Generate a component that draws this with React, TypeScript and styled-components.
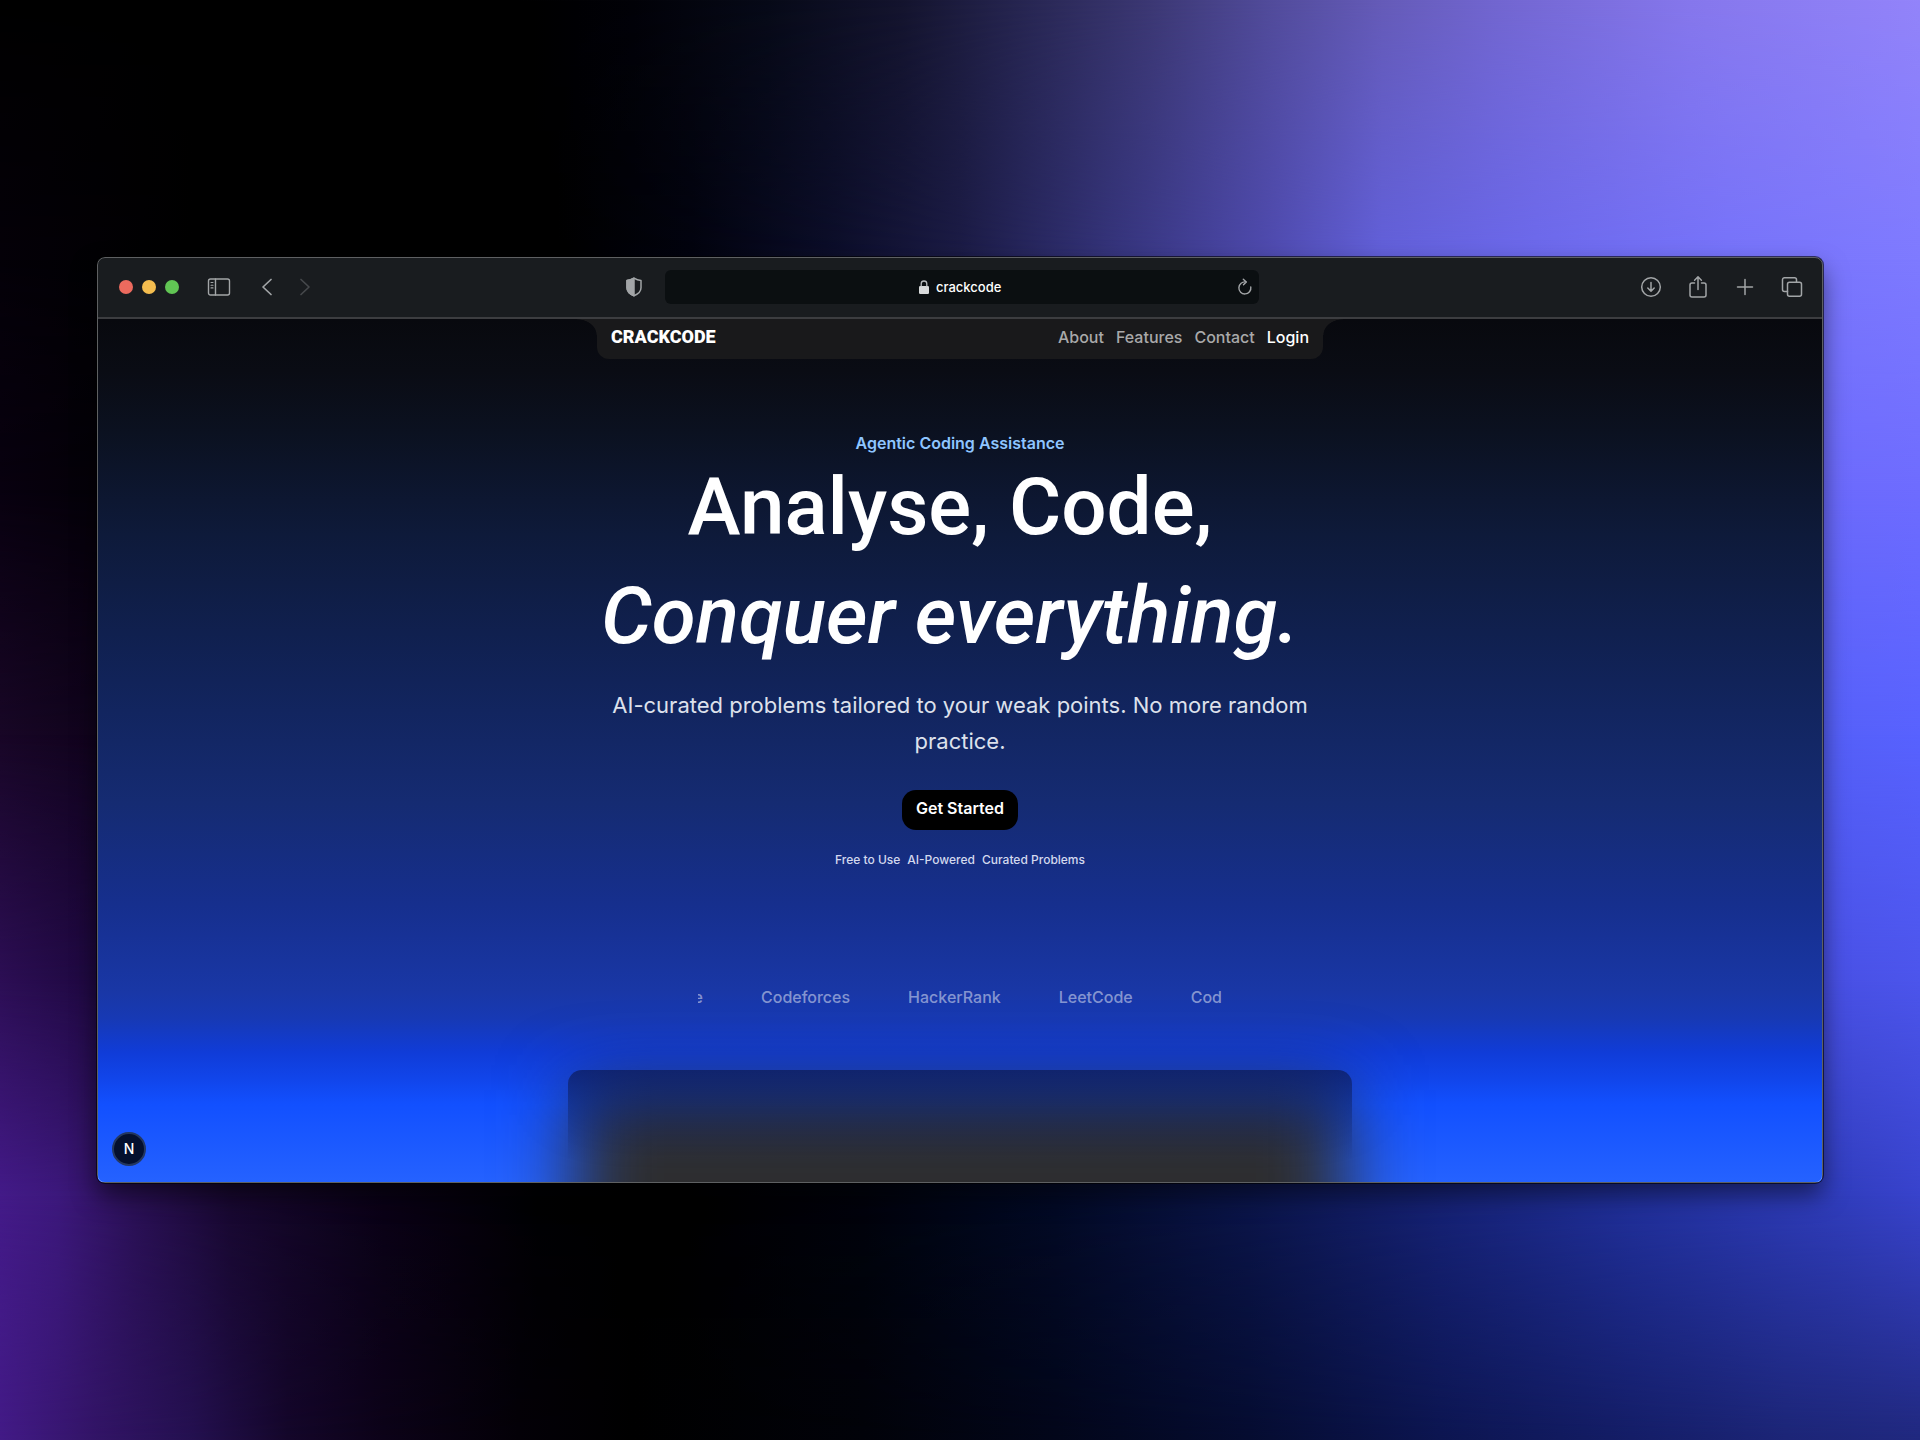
import React from "react";
import styled, { createGlobalStyle } from "styled-components";

const GlobalStyle = createGlobalStyle`
  *, *::before, *::after { box-sizing: border-box; }
  body {
    margin: 0;
    background: #000;
    color: #fff;
    font-family: Inter, "Liberation Sans", sans-serif;
    font-size: 16px;
    line-height: 20px;
  }
  button, input { font: inherit; color: inherit; }
  a { color: inherit; text-decoration: none; }
`;

/* ---------- wallpaper ---------- */

const Desktop = styled.div`
  position: relative;
  isolation: isolate;
  overflow: hidden;
  min-height: 100vh;
  display: flex;
  flex-direction: column;
  justify-content: center;
  padding: 32px 97px;
`;

/* Each band is a horizontal ramp that fades in over the one before it. */
const WallpaperBand = styled.div<{ $colors: string; $from: number; $to: number }>`
  position: absolute;
  inset: 0;
  z-index: -1;
  background: linear-gradient(90deg, ${(p) => p.$colors});
  mask-image: linear-gradient(transparent ${(p) => p.$from}%, #000 ${(p) => p.$to}%);
`;

const bands = [
  {
    from: -1,
    to: 0,
    colors:
      "#000 27%, #020208 33%, #070a18 40%, #14142e 47%, #262550 53%, #3c3874 60%, #514b9a 66%, #655bb8 72%, #7266d0 78%, #8677ec 88%, #9384fa",
  },
  {
    from: 0,
    to: 18,
    colors:
      "#040008, #020004 5%, #000 10%, #000 29%, #02030f 36%, #0b0d28 43%, #1b1b45 50%, #35347c 58%, #4e4aae 66%, #6260da 72%, #6c69ec 80%, #7673fa 90%, #7e7aff",
  },
  { from: 18, to: 34, colors: "#08000f, #040008 5%, #000 10%, #000 30%, #4a4aa8 70%, #6a69fa 92%, #6e6cff" },
  { from: 34, to: 51, colors: "#180626, #10031c 5%, #000 12%, #000 40%, #3a40a8 75%, #5560f8 95%, #5862ff" },
  { from: 51, to: 68, colors: "#2c0e54, #1e0840 5%, #0a0216 12%, #000 30%, #2a31a0 75%, #4850e4 95%, #4c55ec" },
  {
    from: 68,
    to: 83,
    colors:
      "#431a88, #3c187c 3%, #2a1055 7%, #180830 12%, #0a0216 20%, #010003 28%, #000 35%, #00030c 45%, #030a26 55%, #0b154a 65%, #162276 75%, #21309c 85%, #2f3cba 95%, #3843cc",
  },
  {
    from: 83,
    to: 100,
    colors:
      "#421a86, #321466 5%, #241050 10%, #14062a 15%, #0c0218 20%, #030007 27%, #000 33%, #010209 45%, #02061a 55%, #050c30 65%, #0c1550 75%, #141d66 85%, #1c2576 93%, #20287e",
  },
];

/* ---------- browser window ---------- */

const BrowserWindow = styled.div`
  position: relative;
  padding: 1px;
  border-radius: 8px;
  overflow: hidden;
  background: #191c1f;

  &::after {
    content: "";
    position: absolute;
    inset: 0;
    border: 1px solid rgba(255, 255, 255, 0.3);
    border-radius: inherit;
    pointer-events: none;
  }
`;

const WindowShadow = styled.div`
  border-radius: 8px;
  box-shadow: 0 0 0 1px rgba(0, 0, 0, 0.6), 0 12px 24px rgba(0, 0, 0, 0.5);
`;

const Toolbar = styled.header`
  display: grid;
  grid-template-columns: 1fr minmax(240px, 594px) 1fr;
  align-items: center;
  column-gap: 19px;
  padding: 12px 18px 13px 21px;
  background: #191c1f;
  border-bottom: 2px solid #3c3d40;
`;

const ToolbarStart = styled.div`
  display: flex;
  align-items: center;
  gap: 24px;
`;

const TrafficLights = styled.div`
  display: flex;
  gap: 9px;
  margin-right: 4px;
`;

const TrafficLight = styled.button<{ $color: string }>`
  width: 14px;
  height: 14px;
  padding: 0;
  border: 0;
  border-radius: 50%;
  background: ${(p) => p.$color};
`;

const HistoryButtons = styled.div`
  display: flex;
  gap: 14px;
`;

const ToolButton = styled.button<{ $dim?: boolean; $end?: boolean }>`
  display: grid;
  place-items: center;
  width: 24px;
  height: 24px;
  padding: 0;
  border: 0;
  background: none;
  color: ${(p) => (p.$dim ? "#45484b" : "#a2a5a7")};
  margin-left: ${(p) => (p.$end ? "auto" : "0")};

  svg {
    display: block;
    fill: none;
    stroke: currentColor;
    stroke-linecap: round;
    stroke-linejoin: round;
  }
`;

const AddressBar = styled.div`
  display: grid;
  grid-template-columns: 1fr auto 1fr;
  align-items: center;
  height: 34px;
  padding: 0 2px;
  border-radius: 6px;
  background: #0b0f11;
`;

const AddressField = styled.label`
  grid-column: 2;
  display: flex;
  align-items: center;
  gap: 7px;
`;

const AddressInput = styled.input`
  width: 68px;
  padding: 0;
  border: 0;
  outline: 0;
  background: none;
  color: #fff;
  font-size: 13px;
  font-weight: 500;
`;

const ToolbarEnd = styled.div`
  display: flex;
  justify-content: flex-end;
  gap: 23px;
`;

/* ---------- page ---------- */

const Page = styled.div`
  position: relative;
  isolation: isolate;
  overflow: hidden;
  display: flex;
  flex-direction: column;
  align-items: center;
  background: linear-gradient(
    #08090e,
    #0a0c14 6%,
    #0b1120 13%,
    #0e1a3a 25%,
    #112359 42%,
    #152b72 56%,
    #162f8e 68%,
    #1937a6 78%,
    #1739b4 81%,
    #103cd8 85%,
    #1145ea 88%,
    #1250ff 91%,
    #2562ff
  );
`;

const SiteNav = styled.nav`
  position: relative;
  display: flex;
  align-items: center;
  justify-content: space-between;
  width: 100%;
  max-width: 726px;
  padding: 8px 14px 12px;
  border-radius: 0 0 12px 12px;
  background: #19191b;

  &::before,
  &::after {
    content: "";
    position: absolute;
    top: 0;
    width: 20px;
    height: 16px;
  }
  &::before {
    right: 100%;
    background: radial-gradient(ellipse 20px 16px at 0 100%, transparent 96%, #19191b);
  }
  &::after {
    left: 100%;
    background: radial-gradient(ellipse 20px 16px at 100% 100%, transparent 96%, #19191b);
  }
`;

const Logo = styled.a`
  font-family: Roboto, "Liberation Sans", sans-serif;
  font-size: 18px;
  font-weight: 900;
`;

const NavLinks = styled.div`
  display: flex;
  gap: 12px;
`;

const NavLink = styled.a<{ $active?: boolean }>`
  font-weight: 500;
  color: ${(p) => (p.$active ? "#fff" : "#a9a9aa")};
`;

const Hero = styled.main`
  display: flex;
  flex-direction: column;
  align-items: center;
  width: 100%;
  max-width: 726px;
  padding-top: 74px;
  text-align: center;
`;

const Eyebrow = styled.p`
  margin: 0;
  font-weight: 600;
  color: #8ec5ff;
`;

const Headline = styled.h1`
  margin: 0;
  padding-right: 20px;
  font-family: Roboto, "Liberation Sans", sans-serif;
  font-size: 80px;
  font-weight: 500;
  line-height: 109px;

  em { display: block; }
`;

const Lede = styled.p`
  margin: 16px 0 31px;
  font-size: 22px;
  line-height: 36px;
  color: #dde1ec;
`;

const PrimaryButton = styled.button`
  height: 40px;
  padding: 0 14px 4px;
  border: 0;
  border-radius: 14px;
  background: #000;
  color: #fff;
  font-weight: 600;
`;

const Perks = styled.ul`
  display: flex;
  gap: 7px;
  margin: 20px 0 0;
  padding: 0;
  list-style: none;
  font-size: 12px;
  font-weight: 500;
  color: #d3d9ee;
`;

const Marquee = styled.section`
  overflow: hidden;
  width: 100%;
  max-width: 524px;
  margin: 115px 0 61px;
`;

const MarqueeTrack = styled.ul`
  display: flex;
  gap: 58px;
  width: max-content;
  margin: 0;
  padding: 0;
  list-style: none;
  transform: translateX(-69px);
`;

const MarqueeItem = styled.li`
  font-weight: 500;
  line-height: 24px;
  color: rgba(255, 255, 255, 0.48);
`;

const PreviewCard = styled.section`
  position: relative;
  width: 100%;
  max-width: 784px;
  height: 112px;
  border-radius: 14px 14px 0 0;
  background: linear-gradient(rgba(8, 12, 44, 0.5), rgba(20, 24, 44, 0) 80%);

  &::before {
    content: "";
    position: absolute;
    z-index: -1;
    inset: 20px 6px -160px;
    background: #2d2d2f;
    filter: blur(38px);
  }
`;

const DevBadge = styled.button`
  position: absolute;
  left: 14px;
  bottom: 16px;
  width: 34px;
  height: 34px;
  padding: 0;
  border: 2px solid #24375f;
  border-radius: 50%;
  background: #04102e;
  color: #fff;
  font-size: 14px;
  font-weight: 500;
`;

/* ---------- icons ---------- */

const SidebarIcon = () => (
  <svg width="24" height="20" viewBox="0 0 24 20" strokeWidth="1.4" aria-hidden="true">
    <rect x="1.5" y="2" width="21" height="16" rx="2" />
    <path d="M8.5 2v16" />
    <path d="M4 5.5h2M4 8.2h2M4 10.9h2" strokeWidth="1.1" />
  </svg>
);

const ChevronIcon = ({ forward }: { forward?: boolean }) => (
  <svg width="12" height="20" viewBox="0 0 12 20" strokeWidth="1.7" aria-hidden="true">
    <path d={forward ? "M2 2.5 10 10 2 17.5" : "M10 2.5 2 10l8 7.5"} />
  </svg>
);

const ShieldIcon = () => (
  <svg width="18" height="20" viewBox="0 0 18 20" strokeWidth="1.5" aria-hidden="true">
    <path d="M9 1.2c2.3 1.5 4.6 2.2 7 2.3v7.2c0 3.6-2.6 6.2-7 8-4.4-1.8-7-4.4-7-8V3.5C4.4 3.400 6.700 2.700 9 1.200Z" />
    <path d="M9 1.2v17.5c-4.4-1.8-7-4.4-7-8V3.5C4.4 3.4 6.7 2.7 9 1.2Z" fill="currentColor" />
  </svg>
);

const LockIcon = () => (
  <svg width="10" height="14" viewBox="0 0 10 14" fill="none" aria-hidden="true">
    <rect x="0" y="6" width="10" height="8" rx="1.3" fill="#d8dadb" />
    <path d="M2.200 6.500V3.800a2.800 2.800 0 0 1 5.600 0v2.700" stroke="#b9bcbe" strokeWidth="1.3" />
  </svg>
);

const ReloadIcon = () => (
  <svg width="16" height="18" viewBox="0 0 16 18" strokeWidth="1.4" aria-hidden="true">
    <path d="M8.800 4A6 6 0 1 0 13.800 9" />
    <path d="M6.300 1.300 9.300 4 6.500 6.800" />
  </svg>
);

const DownloadIcon = () => (
  <svg width="22" height="22" viewBox="0 0 22 22" strokeWidth="1.5" aria-hidden="true">
    <circle cx="11" cy="11" r="9.3" />
    <path d="M11 6.500v8.700M7.800 12l3.200 3.300 3.200-3.300" />
  </svg>
);

const ShareIcon = () => (
  <svg width="22" height="24" viewBox="0 0 22 24" strokeWidth="1.5" aria-hidden="true">
    <path d="M7.500 8H5a2 2 0 0 0-2 2v10a2 2 0 0 0 2 2h12a2 2 0 0 0 2-2V10a2 2 0 0 0-2-2h-2.500" />
    <path d="M11 14.500V2M7.600 5.200 11 1.800l3.400 3.400" />
  </svg>
);

const PlusIcon = () => (
  <svg width="18" height="18" viewBox="0 0 18 18" strokeWidth="1.5" aria-hidden="true">
    <path d="M9 1.500v15M1.500 9h15" />
  </svg>
);

const TabsIcon = () => (
  <svg width="22" height="22" viewBox="0 0 22 22" strokeWidth="1.5" aria-hidden="true">
    <rect x="6.5" y="6.3" width="14" height="14" rx="2" />
    <path d="M6.500 15.500H3.500a2 2 0 0 1-2-2V3.700a2 2 0 0 1 2-2H13.500a2 2 0 0 1 2 2v2.500" />
  </svg>
);

/* ---------- app ---------- */

const lights = [
  { label: "Close", color: "#ec6a5e" },
  { label: "Minimize", color: "#f4bd4f" },
  { label: "Zoom", color: "#61c554" },
];

const links = ["About", "Features", "Contact"];
const perks = ["Free to Use", "AI-Powered", "Curated Problems"];
const platforms = ["LeetCode", "Codeforces", "HackerRank", "LeetCode", "Codeforces"];

export default function App() {
  return (
    <Desktop>
      <GlobalStyle />
      {bands.map((b) => (
        <WallpaperBand key={b.to} $colors={b.colors} $from={b.from} $to={b.to} />
      ))}
      <WindowShadow>
        <BrowserWindow>
          <Toolbar>
            <ToolbarStart>
              <TrafficLights>
                {lights.map((l) => (
                  <TrafficLight key={l.label} $color={l.color} aria-label={l.label} />
                ))}
              </TrafficLights>
              <ToolButton aria-label="Sidebar"><SidebarIcon /></ToolButton>
              <HistoryButtons>
                <ToolButton aria-label="Back"><ChevronIcon /></ToolButton>
                <ToolButton $dim aria-label="Forward"><ChevronIcon forward /></ToolButton>
              </HistoryButtons>
              <ToolButton $end aria-label="Privacy report"><ShieldIcon /></ToolButton>
            </ToolbarStart>
            <AddressBar>
              <AddressField>
                <LockIcon />
                <AddressInput type="text" defaultValue="crackcode" aria-label="Address" />
              </AddressField>
              <ToolButton $end aria-label="Reload"><ReloadIcon /></ToolButton>
            </AddressBar>
            <ToolbarEnd>
              <ToolButton aria-label="Downloads"><DownloadIcon /></ToolButton>
              <ToolButton aria-label="Share"><ShareIcon /></ToolButton>
              <ToolButton aria-label="New tab"><PlusIcon /></ToolButton>
              <ToolButton aria-label="Show tabs"><TabsIcon /></ToolButton>
            </ToolbarEnd>
          </Toolbar>

          <Page>
            <SiteNav>
              <Logo href="#">CRACKCODE</Logo>
              <NavLinks>
                {links.map((l) => (
                  <NavLink key={l} href="#">{l}</NavLink>
                ))}
                <NavLink $active href="#">Login</NavLink>
              </NavLinks>
            </SiteNav>

            <Hero>
              <Eyebrow>Agentic Coding Assistance</Eyebrow>
              <Headline>
                Analyse, Code, <em>Conquer everything.</em>
              </Headline>
              <Lede>AI-curated problems tailored to your weak points. No more random practice.</Lede>
              <PrimaryButton>Get Started</PrimaryButton>
              <Perks>
                {perks.map((p) => (
                  <li key={p}>{p}</li>
                ))}
              </Perks>
            </Hero>

            <Marquee>
              <MarqueeTrack>
                {platforms.map((p, i) => (
                  <MarqueeItem key={i}>{p}</MarqueeItem>
                ))}
              </MarqueeTrack>
            </Marquee>

            <PreviewCard />
            <DevBadge aria-label="Open dev tools">N</DevBadge>
          </Page>
        </BrowserWindow>
      </WindowShadow>
    </Desktop>
  );
}
